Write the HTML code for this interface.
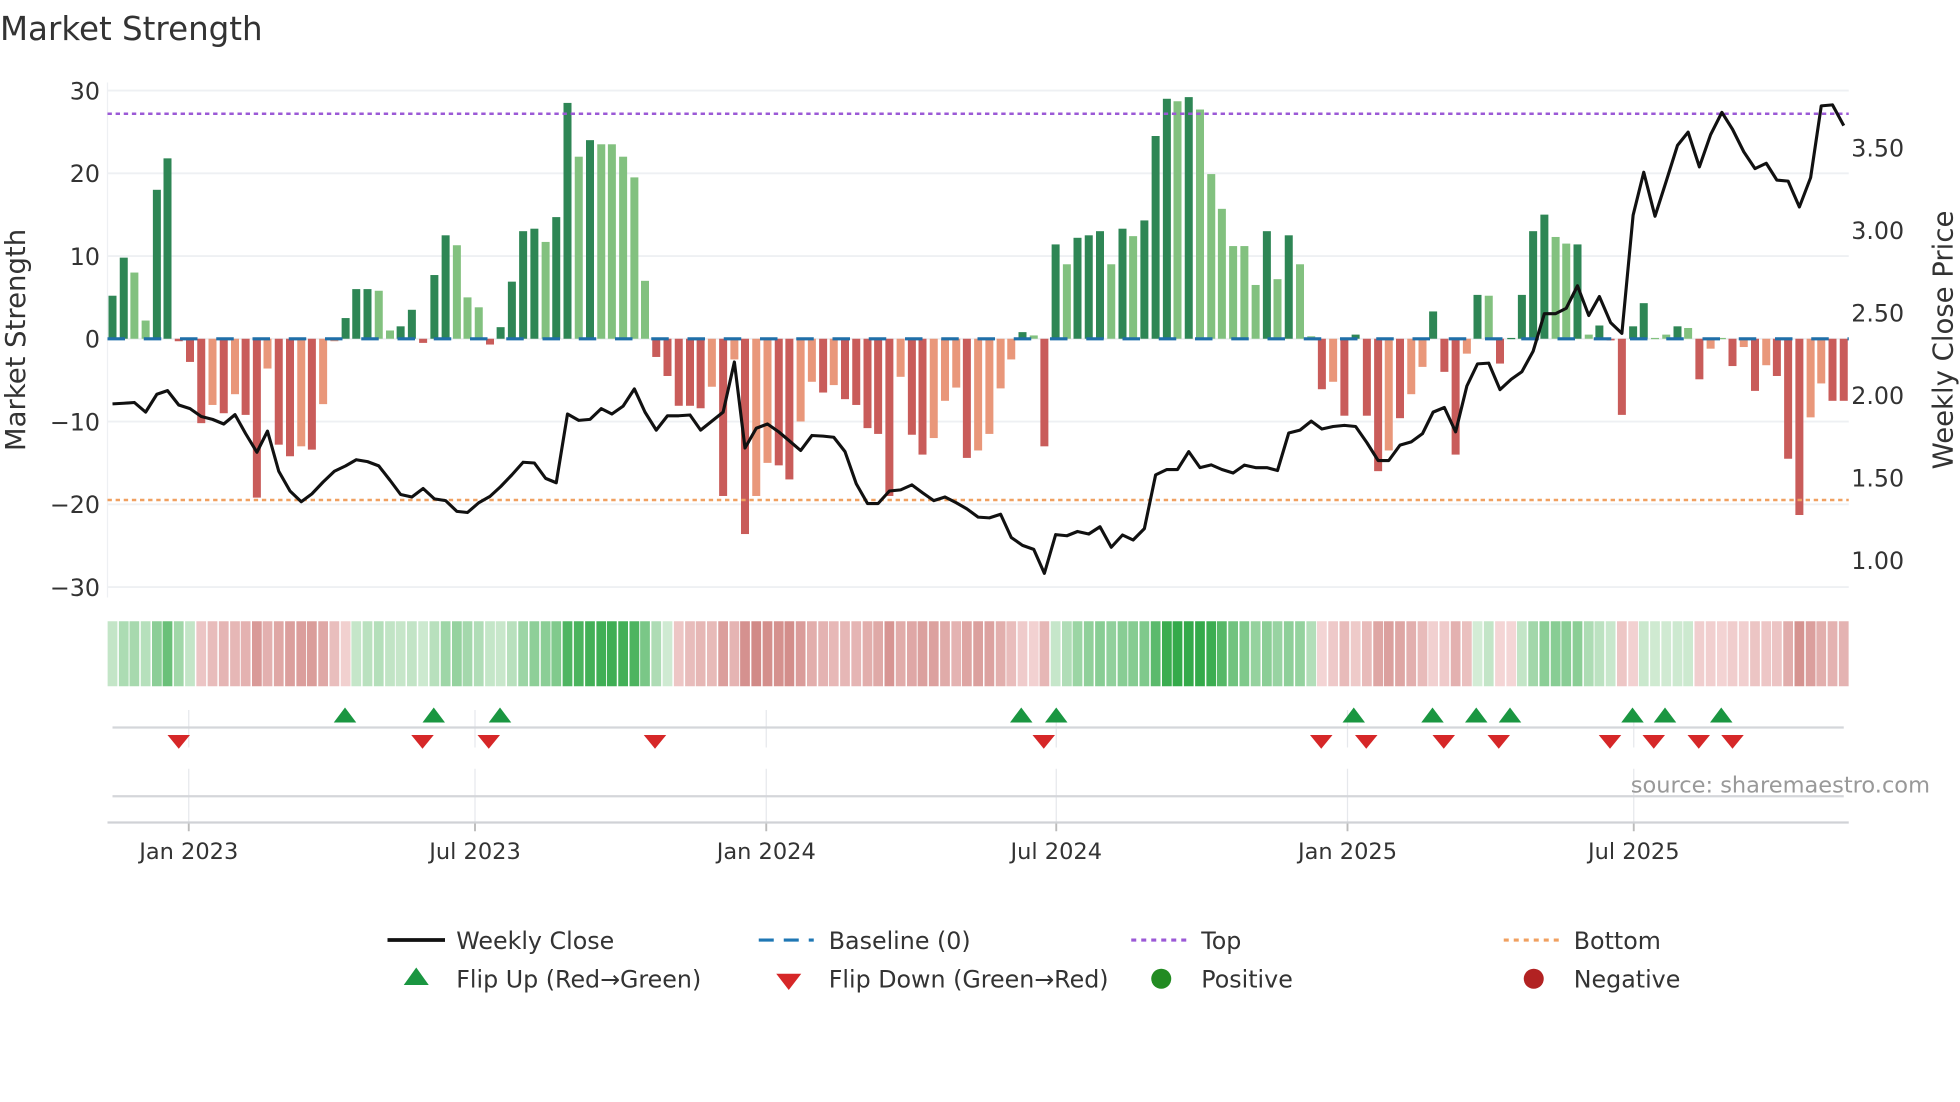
<!DOCTYPE html>
<html><head><meta charset="utf-8"><style>
html,body{margin:0;padding:0;background:#fff;width:1960px;height:1102px;overflow:hidden}
svg text{font-family:"DejaVu Sans","Liberation Sans",sans-serif;fill:#333}
</style></head><body>
<svg id="s" width="1960" height="1102" viewBox="0 0 1568 881.6" xmlns="http://www.w3.org/2000/svg">
<text x="0" y="32" font-size="26">Market Strength</text>
<g id="g"></g>
<text x="1544" y="634" font-size="18" text-anchor="end" style="fill:#999">source: sharemaestro.com</text>
<g font-size="19">
<line x1="310" y1="752" x2="356" y2="752" stroke="#111" stroke-width="3"/>
<text x="365" y="759">Weekly Close</text>
<line x1="607" y1="752" x2="651" y2="752" stroke="#1f77b4" stroke-width="2.5" stroke-dasharray="12 8"/>
<text x="663" y="759">Baseline (0)</text>
<line x1="905" y1="752" x2="949" y2="752" stroke="#9b59d6" stroke-width="2.5" stroke-dasharray="4 4"/>
<text x="961" y="759">Top</text>
<line x1="1203" y1="752" x2="1247" y2="752" stroke="#f0a060" stroke-width="2.5" stroke-dasharray="4 4"/>
<text x="1259" y="759">Bottom</text>
<polygon points="323,788 343,788 333,774" fill="#1a9641"/>
<text x="365" y="790">Flip Up (Red→Green)</text>
<polygon points="621,779 641,779 631,792" fill="#d62728"/>
<text x="663" y="790">Flip Down (Green→Red)</text>
<circle cx="929" cy="783" r="8" fill="#228b22"/>
<text x="961" y="790">Positive</text>
<circle cx="1227" cy="783" r="8" fill="#b22222"/>
<text x="1259" y="790">Negative</text>
</g>
</svg>
<script>
var g=document.getElementById('g'),h='';
function Y(v){return 271-v*6.62;}
function P(p){return 118+(3.5-p)*132;}
[30,20,10,0,-10,-20,-30].forEach(function(v){h+='<line x1="86" x2="1479" y1="'+Y(v)+'" y2="'+Y(v)+'" stroke="#eef0f3" stroke-width="1.5"/>';
h+='<text x="80" y="'+(Y(v)+7)+'" font-size="19" text-anchor="end">'+(v<0?'\u2212'+(-v):v)+'</text>';});
[3.5,3,2.5,2,1.5,1].forEach(function(p){h+='<text x="1481" y="'+(P(p)+7)+'" font-size="19">'+p.toFixed(2)+'</text>';});
h+='<line x1="86" y1="66" x2="86" y2="478" stroke="#eef0f3"/>';
h+='<text transform="translate(20,272) rotate(-90)" font-size="22" text-anchor="middle">Market Strength</text>';
h+='<text transform="translate(1562,272) rotate(-90)" font-size="22" text-anchor="middle">Weekly Close Price</text>';
var b1="180 5.2 1,198 9.8 1,215 8 0,233 2.2 0,251 18 1,268 21.8 1,286 -0.3 1,304 -2.8 1,322 -10.2 1,340 -8 0,358 -9 1,376 -6.7 0,393 -9.2 1,411 -19.2 1,428 -3.6 0,446 -12.8 1,464 -14.2 1,482 -13 0,499 -13.4 1,517 -7.9 0,535 -0.3 0,553 2.5 1,570 6 1,588 6 1,606 5.8 0,624 1 0,641 1.5 1,659 3.5 1,677 -0.5 1,695 7.7 1,713 12.5 1,731 11.3 0,748 5 0,766 3.8 0,784 -0.7 1,801 1.4 1,819 6.9 1,837 13 1,855 13.3 1,873 11.7 0,890 14.7 1,908 28.5 1,926 22 0,944 24 1,962 23.5 0,979 23.5 0,997 22 0,1015 19.5 0,1032 7 0,1050 -2.2 1,1068 -4.5 1,1086 -8.1 1,1104 -8.1 1,1121 -8.4 1,1139 -5.8 0,1157 -19 1,1175 -2.5 0,1192 -23.6 1,1210 -19 0,1228 -15 0,1246 -15.3 1,1263 -17 1,1281 -10 0,1299 -5.2 0,1317 -6.5 1,1334 -5.6 0,1352 -7.3 1,1370 -8 1,1388 -10.8 1,1405 -11.5 1,1423 -19 1,1441 -4.6 0,1459 -11.6 1,1476 -14 1,1494 -12 0,1512 -7.5 0,1530 -5.9 0,1547 -14.4 1,1565 -13.5 0";
var b2="15 -11.5 0,33 -6 0,50 -2.5 0,68 0.8 1,86 0.4 0,103 -13 1,121 11.4 1,139 9 0,156 12.2 1,174 12.5 1,192 13 1,210 9 0,228 13.3 1,245 12.4 0,263 14.3 1,281 24.5 1,299 29 1,316 28.7 0,334 29.2 1,352 27.7 0,370 19.9 0,387 15.7 0,405 11.2 0,423 11.2 0,441 6.5 0,459 13 1,476 7.2 0,494 12.5 1,512 9 0,530 0.3 0,547 -6.1 1,565 -5.2 0,583 -9.3 1,601 0.5 1,619 -9.3 1,637 -16 1,654 -13.5 0,672 -9.6 1,690 -6.7 0,708 -3.4 0,725 3.3 1,743 -4 1,761 -14 1,779 -1.8 0,796 5.3 1,814 5.2 0,832 -3 1,850 0.1 1,867 5.3 1,885 13 1,903 15 1,921 12.3 0,938 11.5 0,956 11.4 1,974 0.5 0,991 1.6 1,1009 -0.2 1,1027 -9.2 1,1045 1.5 1,1062 4.3 1,1080 0.1 0,1098 0.5 0,1116 1.5 1,1133 1.3 0,1151 -4.9 1,1169 -1.2 0,1187 0.1 0,1204 -3.3 1,1222 -1 0,1240 -6.3 1,1258 -3.2 0,1275 -4.5 1,1293 -14.5 1,1311 -21.3 1,1329 -9.5 0,1346 -5.4 0,1364 -7.5 1,1382 -7.5 1";
var bars=[];
b1.split(',').forEach(function(s){var a=s.split(' ');bars.push([+a[0]/2,+a[1],+a[2]]);});
b2.split(',').forEach(function(s){var a=s.split(' ');bars.push([+a[0]/2+784,+a[1],+a[2]]);});
var sm=0;
bars.forEach(function(b,i){var x=b[0],v=b[1];var c=v>=0?(b[2]?'#2e8655':'#82c17f'):(b[2]?'#c95c5a':'#e9977a');
var y0=Y(0),y1=Y(v);h+='<rect x="'+(x-3.2)+'" y="'+Math.min(y0,y1)+'" width="6.4" height="'+Math.max(1,Math.abs(y1-y0))+'" fill="'+c+'"/>';
sm=sm*0.5+v*0.5;var t=Math.min(Math.abs(sm)/25,1);var col;
if(sm>=0){col='rgb('+Math.round(212-160*t)+','+Math.round(236-66*t)+','+Math.round(214-140*t)+')';}
else{col='rgb('+Math.round(244-50*t)+','+Math.round(214-110*t)+','+Math.round(214-114*t)+')';}
h+='<rect x="'+(x-3.9)+'" y="497" width="7.8" height="52" fill="'+col+'"/>';});
h+='<line x1="86" x2="1479" y1="271" y2="271" stroke="#1f6fa8" stroke-width="2.5" stroke-dasharray="14 15"/>';
h+='<line x1="86" x2="1479" y1="91" y2="91" stroke="#9b59d6" stroke-width="2" stroke-dasharray="3.5 3"/>';
h+='<line x1="86" x2="1479" y1="400" y2="400" stroke="#f0a060" stroke-width="2" stroke-dasharray="3.5 3"/>';
var p1="180:962,198:960,215:958,233:985,251:935,268:925,286:965,304:975,322:997,340:1005,358:1018,376:992,393:1045,411:1097,428:1038,446:1150,464:1205,482:1235,499:1213,517:1180,535:1150,553:1135,570:1118,588:1123,606:1135,624:1175,641:1215,659:1222,677:1198,695:1227,713:1232,731:1262,748:1265,766:1238,784:1220,801:1193,819:1160,837:1125,855:1127,873:1170,890:1182,908:990,926:1008,944:1005,962:975,979:990,997:968,1015:920,1032:985,1050:1035,1068:995,1086:995,1104:993,1121:1035,1139:1010,1157:985,1175:845,1192:1085,1210:1030,1228:1018,1246:1040,1263:1065,1281:1092,1299:1050,1317:1052,1334:1055,1352:1095,1370:1185,1388:1240,1405:1240,1423:1205,1441:1202,1459:1188,1476:1210,1494:1232,1512:1222,1530:1238,1547:1255,1565:1278";
var p2="15:1280,33:1270,50:1335,68:1357,86:1368,103:1435,121:1327,139:1330,156:1318,174:1325,192:1305,210:1362,228:1328,245:1342,263:1310,281:1160,299:1145,316:1145,334:1095,352:1140,370:1132,387:1145,405:1155,423:1133,441:1140,459:1140,476:1148,494:1043,512:1035,530:1010,547:1032,565:1025,583:1022,601:1025,619:1070,637:1120,654:1120,672:1077,690:1068,708:1045,725:985,743:972,761:1040,779:912,796:850,814:848,832:922,850:893,867:872,885:815,903:710,921:710,938:695,956:632,974:715,991:662,1009:735,1027:765,1045:435,1062:315,1080:438,1098:340,1116:240,1133:203,1151:300,1169:210,1187:148,1204:195,1222:258,1240:305,1258:290,1275:337,1293:340,1311:412,1329:330,1346:130,1364:127,1382:185";
var pts=[];
p1.split(',').forEach(function(s){var a=s.split(':');pts.push((+a[0]/2)+','+(+a[1]/3.49+47.5).toFixed(1));});
p2.split(',').forEach(function(s){var a=s.split(':');pts.push((+a[0]/2+784)+','+(+a[1]/3.49+47.5).toFixed(1));});
h+='<polyline points="'+pts.join(' ')+'" fill="none" stroke="#111" stroke-width="2.5" stroke-linejoin="round"/>';
var ticks=[[151,'Jan 2023'],[380,'Jul 2023'],[613,'Jan 2024'],[845,'Jul 2024'],[1078,'Jan 2025'],[1307,'Jul 2025']];
ticks.forEach(function(t){h+='<line x1="'+t[0]+'" x2="'+t[0]+'" y1="568" y2="598" stroke="#e6e8ec"/><line x1="'+t[0]+'" x2="'+t[0]+'" y1="615" y2="658" stroke="#e6e8ec"/>';
h+='<line x1="'+t[0]+'" x2="'+t[0]+'" y1="658" y2="665" stroke="#bbb" stroke-width="1.5"/><text x="'+t[0]+'" y="687" font-size="18" text-anchor="middle">'+t[1]+'</text>';});
h+='<line x1="90" x2="1475" y1="582" y2="582" stroke="#d4d6da" stroke-width="1.8"/>';
h+='<line x1="90" x2="1475" y1="637" y2="637" stroke="#d4d6da" stroke-width="1.8"/>';
h+='<line x1="86" x2="1479" y1="658" y2="658" stroke="#d0d2d6" stroke-width="1.8"/>';
[276,347,400,817,845,1083,1146,1181,1208,1306,1332,1377].forEach(function(x){h+='<polygon points="'+(x-9)+',578 '+(x+9)+',578 '+x+',566" fill="#1a9641"/>';});
[143,338,391,524,835,1057,1093,1155,1199,1288,1323,1359,1386].forEach(function(x){h+='<polygon points="'+(x-9)+',588 '+(x+9)+',588 '+x+',599" fill="#d62728"/>';});
g.innerHTML=h;
</script>
</body></html>
